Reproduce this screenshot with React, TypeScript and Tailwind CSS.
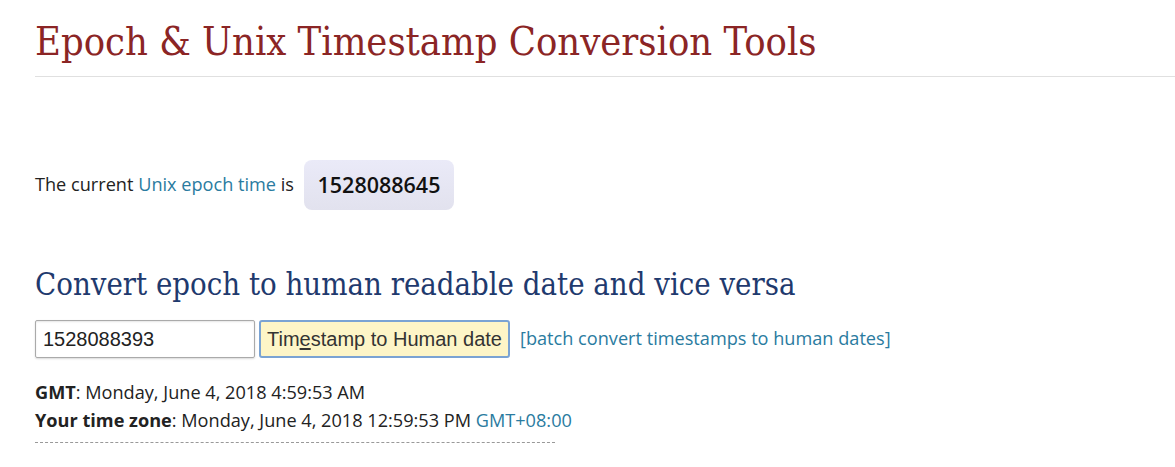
export default function App() {
  return (
    <div className="min-h-[467px] bg-white pl-[35px] font-['Open_Sans',sans-serif] text-[18.15px] text-[#222]">
      <h1 className="border-b border-[#e0e0e0] pt-[18px] pb-[12px] font-['DejaVu_Serif_Condensed','DejaVu_Serif',serif] text-[39.5px] leading-[46px] font-normal text-[#8b2525]">
        Epoch &amp; Unix Timestamp Conversion Tools
      </h1>

      <div className="mt-[83px] flex items-center">
        <span>
          The current <a className="text-[#2a7ba0]">Unix epoch time</a> is
        </span>
        <span className="ml-[10px] flex h-[50px] w-[150px] items-center justify-center rounded-[8px] bg-gradient-to-b from-[#eaeaf8] to-[#e2e2ee] text-[21.5px] font-semibold text-[#111]">
          1528088645
        </span>
      </div>

      <h2 className="mt-[54px] font-['DejaVu_Serif_Condensed','DejaVu_Serif',serif] text-[30.8px] leading-[40px] font-normal text-[#1f3a6e]">
        Convert epoch to human readable date and vice versa
      </h2>

      <div className="mt-[16px] flex items-center">
        <input
          defaultValue="1528088393"
          className="h-[38px] w-[220px] rounded-[2px] border border-[#aaa] px-[7px] font-['Liberation_Sans',sans-serif] text-[20px] text-[#222] shadow-[inset_0_1px_2px_rgba(0,0,0,0.1),0_1px_2px_rgba(0,0,0,0.15)] outline-none"
        />
        <button className="ml-[4px] h-[38px] w-[251px] rounded-[3px] border-2 border-[#7aa3d3] bg-[#fdf5c7] font-['Liberation_Sans',sans-serif] text-[20px] text-[#333]">
          Tim<span className="underline underline-offset-2">e</span>stamp to Human date
        </button>
        <a className="ml-[10px] text-[#2a7ba0]">[batch convert timestamps to human dates]</a>
      </div>

      <div className="mt-[20px] leading-[28px]">
        <div>
          <b>GMT</b>: Monday, June 4, 2018 4:59:53 AM
        </div>
        <div>
          <b>Your time zone</b>: Monday, June 4, 2018 12:59:53 PM{" "}
          <a className="text-[#2a7ba0]">GMT+08:00</a>
        </div>
      </div>
      <div className="mt-[8px] w-[520px] border-t border-dashed border-[#999]" />
    </div>
  );
}
